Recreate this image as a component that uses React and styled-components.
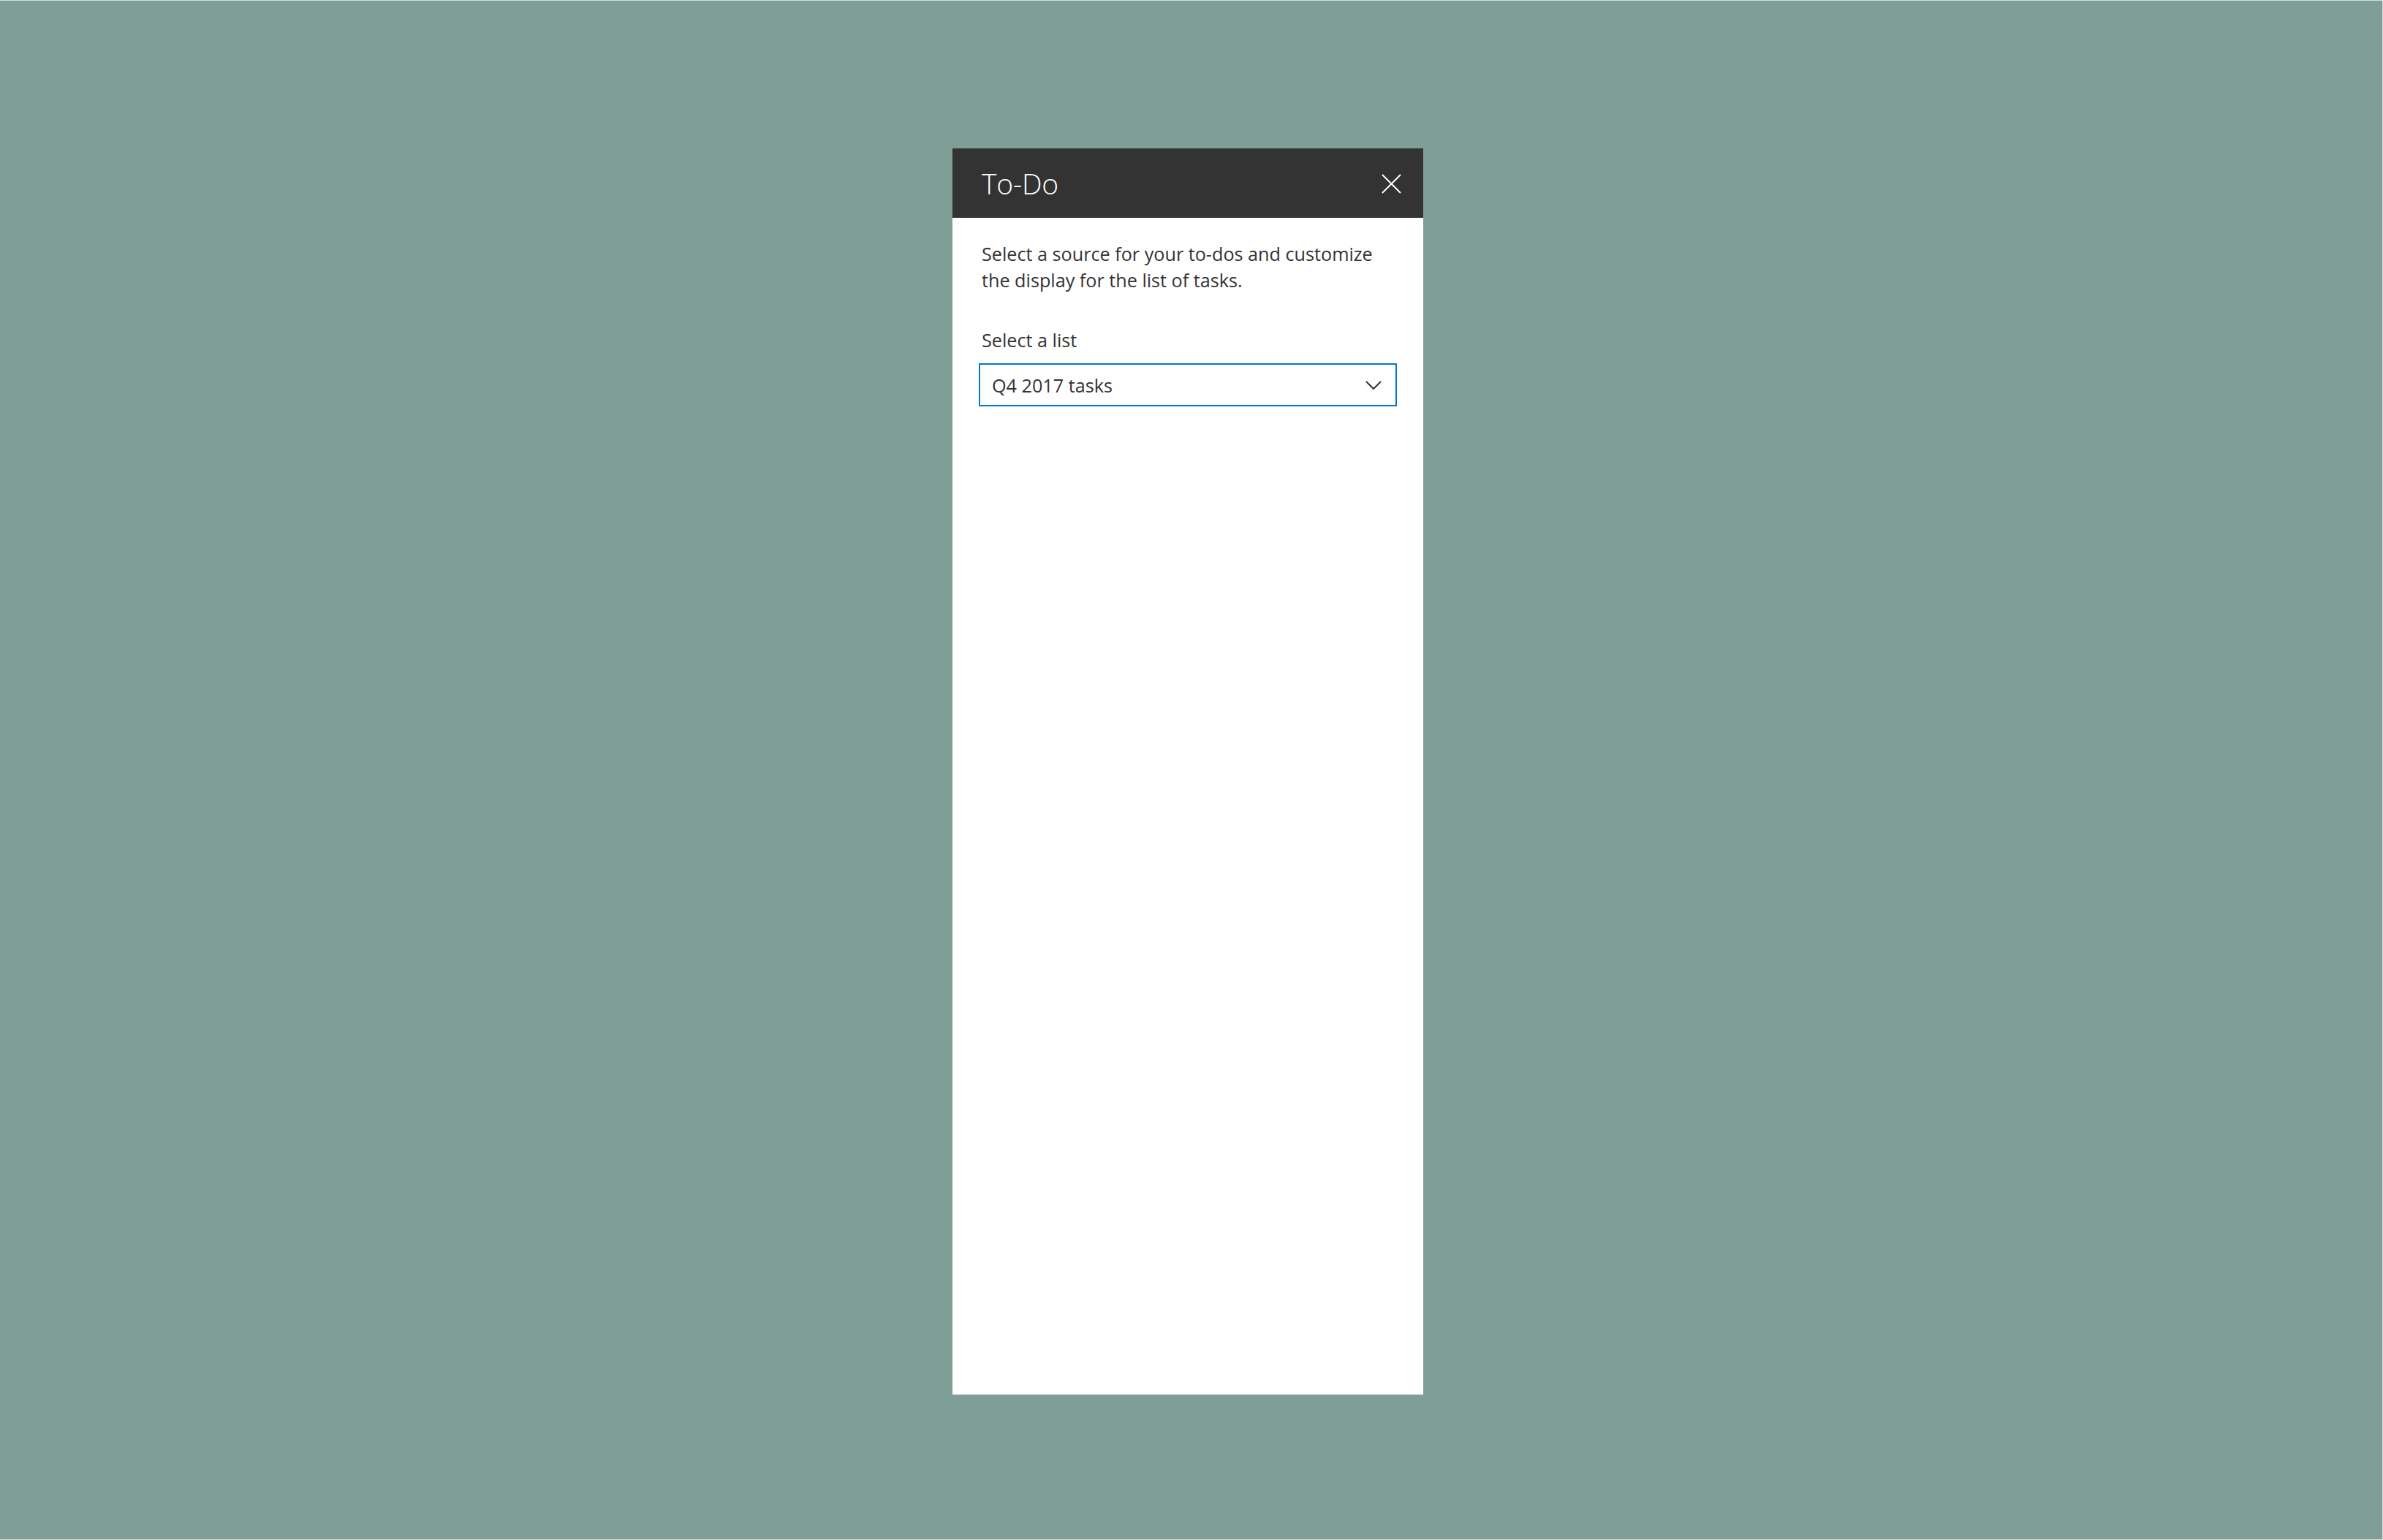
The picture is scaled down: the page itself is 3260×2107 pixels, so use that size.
import React from "react";
import styled, { createGlobalStyle } from "styled-components";

const Global = createGlobalStyle`
  html, body { margin: 0; padding: 0; }
  body { font-family: "Open Sans", "Noto Sans", sans-serif; }
`;

const Page = styled.div`
  box-sizing: border-box;
  width: 3260px;
  height: 2107px;
  background: #7f9e95;
  border-top: 1px solid #d9dfdd;
  border-right: 1px solid #d9dfdd;
  border-bottom: 1px solid #d9dfdd;
  padding: 202px 0 0 1303px;
  overflow: hidden;
`;

const Panel = styled.section`
  width: 644px;
  height: 1705px;
  background: #ffffff;
  display: flex;
  flex-direction: column;
`;

const Header = styled.header`
  box-sizing: border-box;
  height: 95px;
  background: #333333;
  display: flex;
  align-items: center;
  justify-content: space-between;
  padding: 0 30px 0 40px;
`;

const Title = styled.h1`
  margin: 0;
  font-family: "Open Sans", sans-serif;
  font-weight: 300;
  font-size: 39px;
  line-height: 1;
  color: #ffffff;
  letter-spacing: -0.3px;
`;

const CloseButton = styled.button`
  border: 0;
  background: transparent;
  padding: 0;
  width: 27px;
  height: 27px;
  display: flex;
  align-items: center;
  justify-content: center;
  cursor: pointer;
  margin-top: 2px;
`;

const Body = styled.div`
  padding: 31px 40px 0 40px;
  display: flex;
  flex-direction: column;
`;

const Description = styled.p`
  margin: 0;
  font-family: "Open Sans", sans-serif;
  font-size: 25.2px;
  line-height: 36px;
  color: #333333;
`;

const Label = styled.label`
  margin-top: 47px;
  font-family: "Open Sans", sans-serif;
  font-size: 25.2px;
  line-height: 35px;
  color: #333333;
`;

const Dropdown = styled.div`
  box-sizing: border-box;
  margin: 14px -4px 0 -4px;
  height: 59px;
  border: 2px solid #0078d4;
  display: flex;
  align-items: center;
  justify-content: space-between;
  padding: 0 19px 0 16px;
  font-family: "Open Sans", sans-serif;
  font-size: 25.2px;
  color: #333333;
`;

const Chevron = () => (
  <svg width="22" height="12" viewBox="0 0 22 12" aria-hidden="true">
    <path d="M1 1 L11 11 L21 1" fill="none" stroke="#333" strokeWidth="2" />
  </svg>
);

const CloseIcon = () => (
  <svg width="27" height="27" viewBox="0 0 27 27" aria-hidden="true">
    <path d="M1 1 L26 26 M26 1 L1 26" fill="none" stroke="#fff" strokeWidth="2" />
  </svg>
);

export default function App() {
  return (
    <>
      <Global />
      <Page>
        <Panel>
          <Header>
            <Title>To-Do</Title>
            <CloseButton aria-label="Close">
              <CloseIcon />
            </CloseButton>
          </Header>
          <Body>
            <Description>
              Select a source for your to-dos and customize the display for the list of tasks.
            </Description>
            <Label>Select a list</Label>
            <Dropdown>
              <span>Q4 2017 tasks</span>
              <Chevron />
            </Dropdown>
          </Body>
        </Panel>
      </Page>
    </>
  );
}
